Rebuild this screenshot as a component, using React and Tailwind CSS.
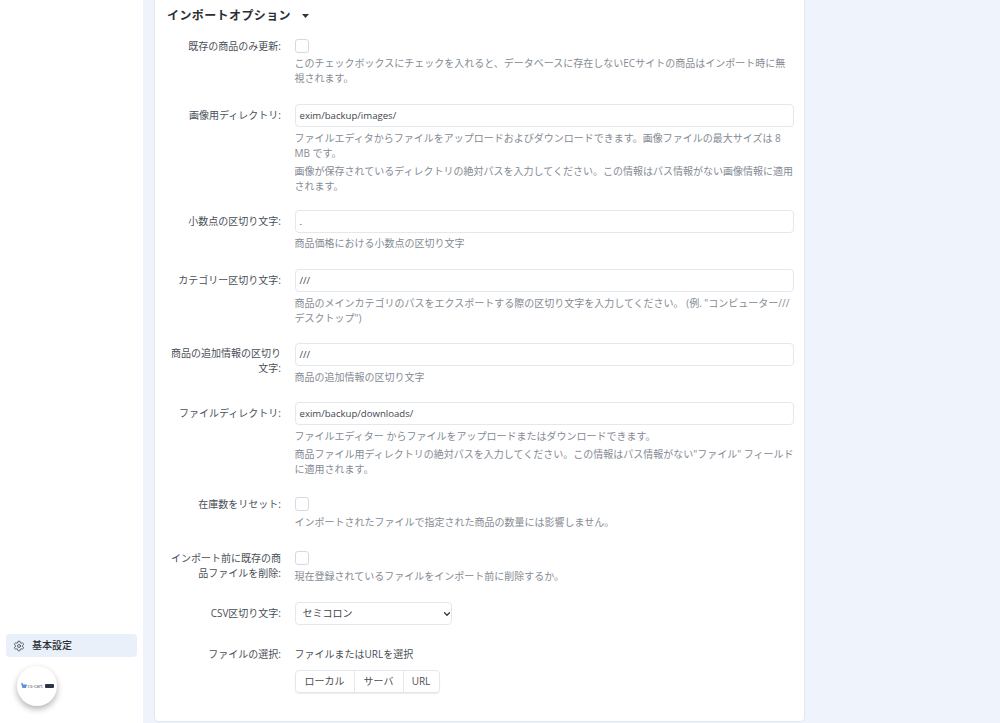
import React from "react";
import { ChevronDown, Settings } from "lucide-react";

const Help = ({ children, className = "mt-[4px]" }) => (
  <p className={`text-[10px] leading-[15px] text-[#858b94] ${className}`}>{children}</p>
);

const Row = ({ label, children, className = "", labelClass = "pt-[3.5px]" }) => (
  <div className={`flex ${className}`}>
    <label className={`w-[114px] shrink-0 text-right text-[10px] leading-[15px] text-[#4a4f57] ${labelClass}`}>{label}</label>
    <div className="w-[499.5px] ml-[13.5px]">{children}</div>
  </div>
);

const TextInput = ({ value }) => (
  <div className="h-[23px] border border-[#e3e7ee] rounded-[4px] bg-white px-[4px] text-[9.6px] leading-[22px] text-[#41464d]">
    {value}
  </div>
);

const Check = () => <div className="w-[14px] h-[14px] border border-[#d5dae2] rounded-[3px] bg-white"></div>;

const App = () => {
  return (
    <div
      className="h-[723px] w-[1000px] overflow-hidden flex bg-[#eff3fb]"
      style={{ fontFamily: '"Open Sans", "Noto Sans CJK JP", sans-serif' }}
    >
      {/* sidebar */}
      <div className="w-[143px] shrink-0 bg-white flex flex-col justify-end pb-[17px] px-[6px]">
        <div className="h-[23px] rounded-[4px] bg-[#e9f0f9] flex items-center pl-[7px] gap-[7px]">
          <Settings size={12} strokeWidth={1.5} className="text-[#33373d]" />
          <span className="text-[10px] font-medium text-[#2b2f35]">基本設定</span>
        </div>
        <div className="mt-[9px] ml-[11px] w-[40px] h-[40px] rounded-full bg-white shadow-[0_3px_6px_rgba(0,0,0,0.3)] flex items-center justify-center gap-[1px]">
          <svg width="6" height="6" viewBox="0 0 6 6">
            <path d="M0 0h1.5l.7 1.5H6L5 5H1.5z" fill="#5b8fe0" />
          </svg>
          <span className="text-[5px] text-[#555b66] leading-none w-[16px] whitespace-nowrap">cs-cart</span>
          <span className="w-[9px] h-[4px] bg-[#2d3446] rounded-[1px]"></span>
        </div>
      </div>

      {/* content */}
      <div className="ml-[11px] w-[651px] h-[722px] bg-white border border-[#e3e7ee] border-t-0 rounded-b-[5px] pl-[12px]">
        <div className="flex items-center mt-[7px] h-[18px]">
          <h3 className="text-[12px] font-bold text-[#2b2f35] tracking-[0.4px]">インポートオプション</h3>
          <svg width="7" height="4" viewBox="0 0 7 4" className="ml-[11px]">
            <path d="M0 0h7L3.5 4z" fill="#33373d" />
          </svg>
        </div>

        <Row label="既存の商品のみ更新:" className="mt-[14px]" labelClass="pt-[0px]">
          <Check />
          <Help className="mt-[3px]">このチェックボックスにチェックを入れると、データベースに存在しないECサイトの商品はインポート時に無視されます。</Help>
        </Row>

        <Row label="画像用ディレクトリ:" className="mt-[18px]">
          <TextInput value="exim/backup/images/" />
          <Help>ファイルエディタからファイルをアップロードおよびダウンロードできます。画像ファイルの最大サイズは 8 MB です。</Help>
          <Help className="mt-[3px]">画像が保存されているディレクトリの絶対パスを入力してください。この情報はパス情報がない画像情報に適用されます。</Help>
        </Row>

        <Row label="小数点の区切り文字:" className="mt-[16px]">
          <TextInput value="." />
          <Help className="mt-[3px]">商品価格における小数点の区切り文字</Help>
        </Row>

        <Row label="カテゴリー区切り文字:" className="mt-[18px]">
          <TextInput value="///" />
          <Help>商品のメインカテゴリのパスをエクスポートする際の区切り文字を入力してください。 (例. "コンピューター///デスクトップ")</Help>
        </Row>

        <Row label="商品の追加情報の区切り文字:" className="mt-[17px]" labelClass="pt-[3px]">
          <TextInput value="///" />
          <Help>商品の追加情報の区切り文字</Help>
        </Row>

        <Row label="ファイルディレクトリ:" className="mt-[17px]">
          <TextInput value="exim/backup/downloads/" />
          <Help>ファイルエディター からファイルをアップロードまたはダウンロードできます。</Help>
          <Help className="mt-[3px] -mr-[4px]">商品ファイル用ディレクトリの絶対パスを入力してください。この情報はパス情報がない"ファイル" フィールドに適用されます。</Help>
        </Row>

        <Row label="在庫数をリセット:" className="mt-[20px]" labelClass="pt-[0px]">
          <Check />
          <Help>インポートされたファイルで指定された商品の数量には影響しません。</Help>
        </Row>

        <Row label="インポート前に既存の商品ファイルを削除:" className="mt-[21px]" labelClass="pt-[0px]">
          <Check />
          <Help>現在登録されているファイルをインポート前に削除するか。</Help>
        </Row>

        <Row label="CSV区切り文字:" className="mt-[18px]">
          <div className="w-[157px] h-[23px] border border-[#e3e7ee] rounded-[4px] flex items-center justify-between pl-[7px] text-[10px] text-[#41464d]">
            <span>セミコロン</span>
            <ChevronDown size={10} strokeWidth={3} className="text-[#33373d] -mr-[1px]" />
          </div>
        </Row>

        <Row label="ファイルの選択:" className="mt-[22px]" labelClass="pt-[0px]">
          <div className="text-[10px] leading-[15px] text-[#4a4f57]">ファイルまたはURLを選択</div>
          <div className="mt-[8px] inline-flex h-[23px] border border-[#e3e7ee] rounded-[4px] text-[10px] text-[#4a4f57] shadow-[0_1px_1px_rgba(0,0,0,0.08)]">
            <div className="w-[59px] flex items-center justify-center border-r border-[#e3e7ee]">ローカル</div>
            <div className="w-[49px] flex items-center justify-center border-r border-[#e3e7ee]">サーバ</div>
            <div className="w-[35px] flex items-center justify-center">URL</div>
          </div>
        </Row>
      </div>
    </div>
  );
};

export default App;
